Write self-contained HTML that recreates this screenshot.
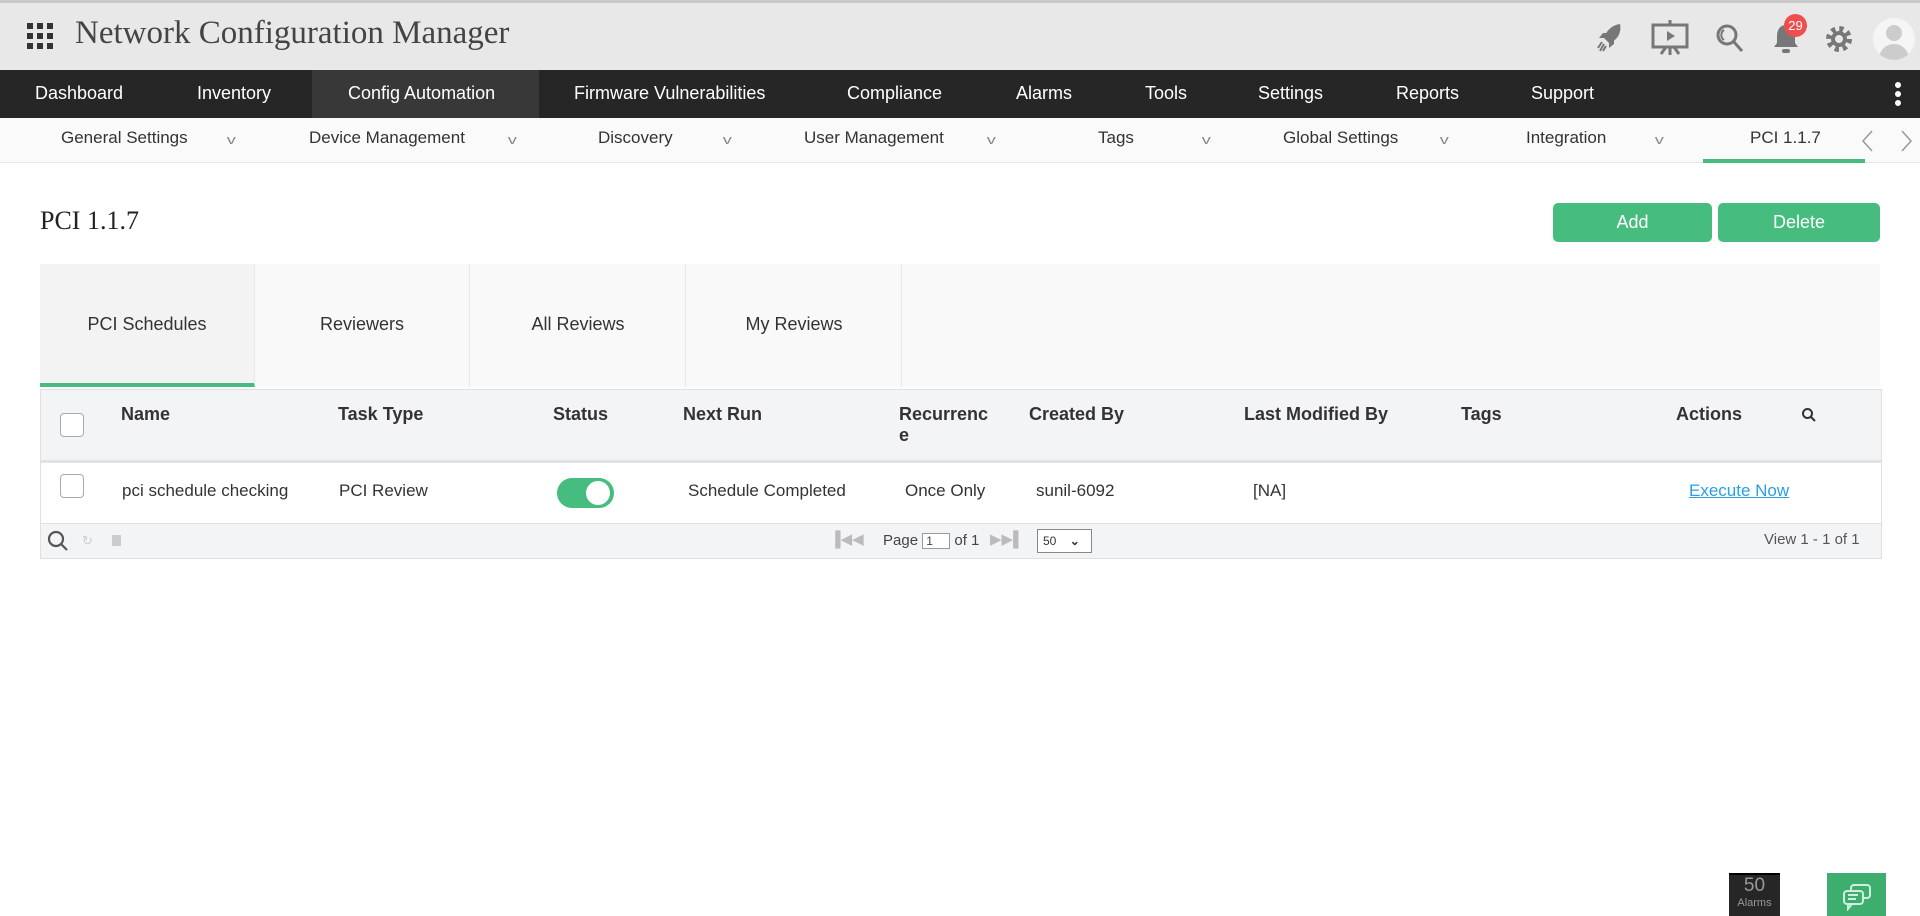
<!DOCTYPE html>
<html><head><meta charset="utf-8"><style>
*{margin:0;padding:0;box-sizing:border-box}
body{width:1920px;height:916px;overflow:hidden;background:#fff;font-family:"Liberation Sans",sans-serif;position:relative;color:#333}
.a{position:absolute;white-space:nowrap}
#hdr{position:absolute;left:0;top:0;width:1920px;height:70px;background:#e8e8e8;border-top:3px solid #c8c8c8}
#nav{position:absolute;left:0;top:70px;width:1920px;height:48px;background:#262626}
#nav .a{color:#fff;font-size:18px;top:13px}
#sub{position:absolute;left:0;top:118px;width:1920px;height:45px;background:#fafafa;border-bottom:1px solid #e6e6e6}
#sub .a{font-size:17px;color:#333;top:10px}
#sub .c{color:#888;font-size:13px;top:14px;transform:scaleX(1.4)}
.th{font-size:18px;font-weight:bold;color:#333;top:404px}
.td{font-size:17px;color:#333;top:481px}
.cb{position:absolute;width:24px;height:24px;border:1px solid #aaa;border-radius:4px;background:#fff}
.btn{position:absolute;top:203px;height:39px;background:#46bd7e;border-radius:5px;color:#fff;font-size:18px;text-align:center;line-height:39px}
.tab{position:absolute;top:264px;height:123px;width:215px;border-right:1px solid #e8e8e8;text-align:center;line-height:120px;font-size:18px;color:#333}
</style></head><body>
<div id="hdr">
<svg class="a" style="left:27px;top:20px" width="26" height="26" viewBox="0 0 26 26" fill="#333"><rect x="0" y="0" width="6" height="6"/><rect x="10" y="0" width="6" height="6"/><rect x="20" y="0" width="6" height="6"/><rect x="0" y="10" width="6" height="6"/><rect x="10" y="10" width="6" height="6"/><rect x="20" y="10" width="6" height="6"/><rect x="0" y="20" width="6" height="6"/><rect x="10" y="20" width="6" height="6"/><rect x="20" y="20" width="6" height="6"/></svg>
<div class="a" style="left:75px;top:12px;font-family:'Liberation Serif',serif;font-size:33px;color:#444">Network Configuration Manager</div>
<svg class="a" style="left:1596px;top:19px" width="28" height="32" viewBox="0 0 28 32" fill="#777"><path d="M24 2 C16 3 10 9 8 16 L13 21 C20 19 26 12 24 2Z"/><path d="M8 16 L3 16 L7 11 L12 11Z M13 21 L13 26 L18 22 L18 17Z"/><path d="M6 20 L2 26 M8 22 L4 29 M10 24 L7 29" stroke="#777" stroke-width="2"/></svg>
<svg class="a" style="left:1651px;top:17px" width="38" height="36" viewBox="0 0 38 36" fill="none" stroke="#777" stroke-width="3"><rect x="2" y="5" width="34" height="22"/><path d="M19 0v5M19 27v8M10 34l5-7M28 34l-5-7"/><path d="M16 11v10l8-5z" fill="#777" stroke="none"/></svg>
<svg class="a" style="left:1716px;top:20px" width="28" height="30" viewBox="0 0 28 30" fill="none" stroke="#777" stroke-width="3"><circle cx="11" cy="12" r="9"/><path d="M18 19l8 9"/><path d="M8 7a6 6 0 0 0 0 10" stroke-width="2"/></svg>
<svg class="a" style="left:1773px;top:20px" width="26" height="32" viewBox="0 0 26 32" fill="#777"><path d="M13 2c-6 0-9 5-9 11v7l-3 4h24l-3-4v-7c0-6-3-11-9-11z"/><rect x="9" y="26" width="8" height="4" rx="2"/></svg>
<div class="a" style="left:1784px;top:11px;width:23px;height:23px;border-radius:50%;background:#f04e4e;color:#fff;font-size:13px;text-align:center;line-height:23px">29</div>
<svg class="a" style="left:1825px;top:22px" width="28" height="28" viewBox="0 0 28 28"><circle cx="14" cy="14" r="10" fill="none" stroke="#777" stroke-width="6" stroke-dasharray="4 3.85"/><circle cx="14" cy="14" r="8" fill="#777"/><circle cx="14" cy="14" r="4" fill="#e8e8e8"/></svg>
<div class="a" style="left:1873px;top:15px;width:42px;height:42px;border-radius:50%;background:#f5f5f5;overflow:hidden"><div class="a" style="left:13px;top:7px;width:16px;height:16px;border-radius:50%;background:#ccc"></div><div class="a" style="left:6px;top:26px;width:30px;height:22px;border-radius:15px 15px 0 0;background:#ccc"></div></div>
</div>
<div id="nav">
<div class="a" style="left:312px;top:0;width:227px;height:48px;background:#383838"></div>
<div class="a" style="left:35px">Dashboard</div><div class="a" style="left:197px">Inventory</div><div class="a" style="left:348px">Config Automation</div><div class="a" style="left:574px">Firmware Vulnerabilities</div><div class="a" style="left:847px">Compliance</div><div class="a" style="left:1016px">Alarms</div><div class="a" style="left:1145px">Tools</div><div class="a" style="left:1258px">Settings</div><div class="a" style="left:1396px">Reports</div><div class="a" style="left:1531px">Support</div>
<div class="a" style="left:1895px;top:12px;width:6px;height:6px;border-radius:50%;background:#fff;box-shadow:0 9px 0 #fff,0 18px 0 #fff"></div>
</div>
<div id="sub">
<div class="a" style="left:61px">General Settings</div><div class="a c" style="left:228px">v</div>
<div class="a" style="left:309px">Device Management</div><div class="a c" style="left:509px">v</div>
<div class="a" style="left:598px">Discovery</div><div class="a c" style="left:724px">v</div>
<div class="a" style="left:804px">User Management</div><div class="a c" style="left:988px">v</div>
<div class="a" style="left:1098px">Tags</div><div class="a c" style="left:1203px">v</div>
<div class="a" style="left:1283px">Global Settings</div><div class="a c" style="left:1441px">v</div>
<div class="a" style="left:1526px">Integration</div><div class="a c" style="left:1656px">v</div>
<div class="a" style="left:1750px">PCI 1.1.7</div>
<div class="a" style="left:1703px;top:41px;width:162px;height:4px;background:#46bd7e"></div>
<svg class="a" style="left:1860px;top:12px" width="60" height="22" viewBox="0 0 60 22" fill="none" stroke="#999" stroke-width="1.5"><path d="M12 1L3 11l9 10M42 1l9 10-9 10"/></svg>
</div>
<div class="a" style="left:40px;top:206px;font-size:26px;color:#222;font-family:'Liberation Serif',serif">PCI 1.1.7</div>
<div class="btn" style="left:1553px;width:159px">Add</div>
<div class="btn" style="left:1718px;width:162px">Delete</div>
<div class="a" style="left:40px;top:264px;width:1840px;height:123px;background:#f9f9f9"></div>
<div class="tab" style="left:40px;background:#f3f3f3;border-bottom:4px solid #46bd7e">PCI Schedules</div>
<div class="tab" style="left:255px">Reviewers</div>
<div class="tab" style="left:471px">All Reviews</div>
<div class="tab" style="left:687px">My Reviews</div>
<div class="a" style="left:40px;top:389px;width:1842px;height:170px;border:1px solid #e0e0e0"></div>
<div class="a" style="left:41px;top:390px;width:1840px;height:73px;background:#f3f4f6;border-bottom:3px solid #e2e2e2"></div>
<div class="cb" style="left:60px;top:413px"></div>
<div class="a th" style="left:121px">Name</div><div class="a th" style="left:338px">Task Type</div><div class="a th" style="left:553px">Status</div><div class="a th" style="left:683px">Next Run</div><div class="a th" style="left:899px">Recurrenc<br>e</div><div class="a th" style="left:1029px">Created By</div><div class="a th" style="left:1244px">Last Modified By</div><div class="a th" style="left:1461px">Tags</div><div class="a th" style="left:1676px">Actions</div>
<svg class="a" style="left:1801px;top:407px" width="16" height="16" viewBox="0 0 16 16" fill="none" stroke="#333" stroke-width="2"><circle cx="6.5" cy="6.5" r="4.5"/><path d="M10 10l4 4"/></svg>
<div class="cb" style="left:60px;top:474px"></div>
<div class="a td" style="left:122px">pci schedule checking</div><div class="a td" style="left:339px">PCI Review</div>
<div class="a" style="left:557px;top:478px;width:57px;height:30px;border-radius:15px;background:#46bd7e"><div class="a" style="left:29px;top:3px;width:24px;height:24px;border-radius:50%;background:#fff"></div></div>
<div class="a td" style="left:688px">Schedule Completed</div><div class="a td" style="left:905px">Once Only</div><div class="a td" style="left:1036px">sunil-6092</div><div class="a td" style="left:1253px">[NA]</div>
<div class="a td" style="left:1689px;color:#2a9ee8;text-decoration:underline">Execute Now</div>
<div class="a" style="left:41px;top:523px;width:1840px;height:35px;background:#f3f4f6;border-top:1px solid #e0e0e0"></div>
<svg class="a" style="left:47px;top:530px" width="22" height="22" viewBox="0 0 22 22" fill="none" stroke="#555" stroke-width="2.2"><circle cx="9" cy="9" r="7"/><path d="M14 14l6 6"/></svg>
<div class="a" style="left:82px;top:533px;color:#ccc;font-size:13px">↻</div>
<div class="a" style="left:112px;top:535px;width:9px;height:11px;background:#ccc"></div>
<div class="a" style="left:830px;top:530px;font-size:15px;color:#bbb">▐◀◀</div>
<div class="a" style="left:883px;top:532px;font-size:15px;color:#444">Page <span style="display:inline-block;width:28px;height:16px;border:1px solid #999;background:#fff;font-size:12px;vertical-align:middle;line-height:14px;padding-left:3px">1</span> of 1</div>
<div class="a" style="left:990px;top:530px;font-size:15px;color:#bbb">▶▶▌</div>
<div class="a" style="left:1037px;top:529px;width:55px;height:24px;border:1px solid #888;background:#fff;font-size:12px;line-height:22px;padding-left:5px">50 <b style="margin-left:10px">⌄</b></div>
<div class="a" style="left:1764px;top:531px;font-size:15px;color:#555">View 1 - 1 of 1</div>
<div class="a" style="left:1729px;top:873px;width:51px;height:43px;background:#262626;border-top:2px solid #000;color:#999;text-align:center;font-size:19px;line-height:22px">50<div style="font-size:11px;line-height:12px">Alarms</div></div>
<div class="a" style="left:1827px;top:873px;width:59px;height:43px;background:#3eae6f">
<svg class="a" style="left:15px;top:10px" width="30" height="28" viewBox="0 0 30 28" fill="none" stroke="#cfeedd" stroke-width="2"><rect x="9" y="2" width="19" height="13" rx="3"/><rect x="2" y="8" width="19" height="13" rx="3" fill="#3eae6f"/><path d="M6 21v5l4-5M6 12h10M6 16h8"/></svg></div>
</body></html>
